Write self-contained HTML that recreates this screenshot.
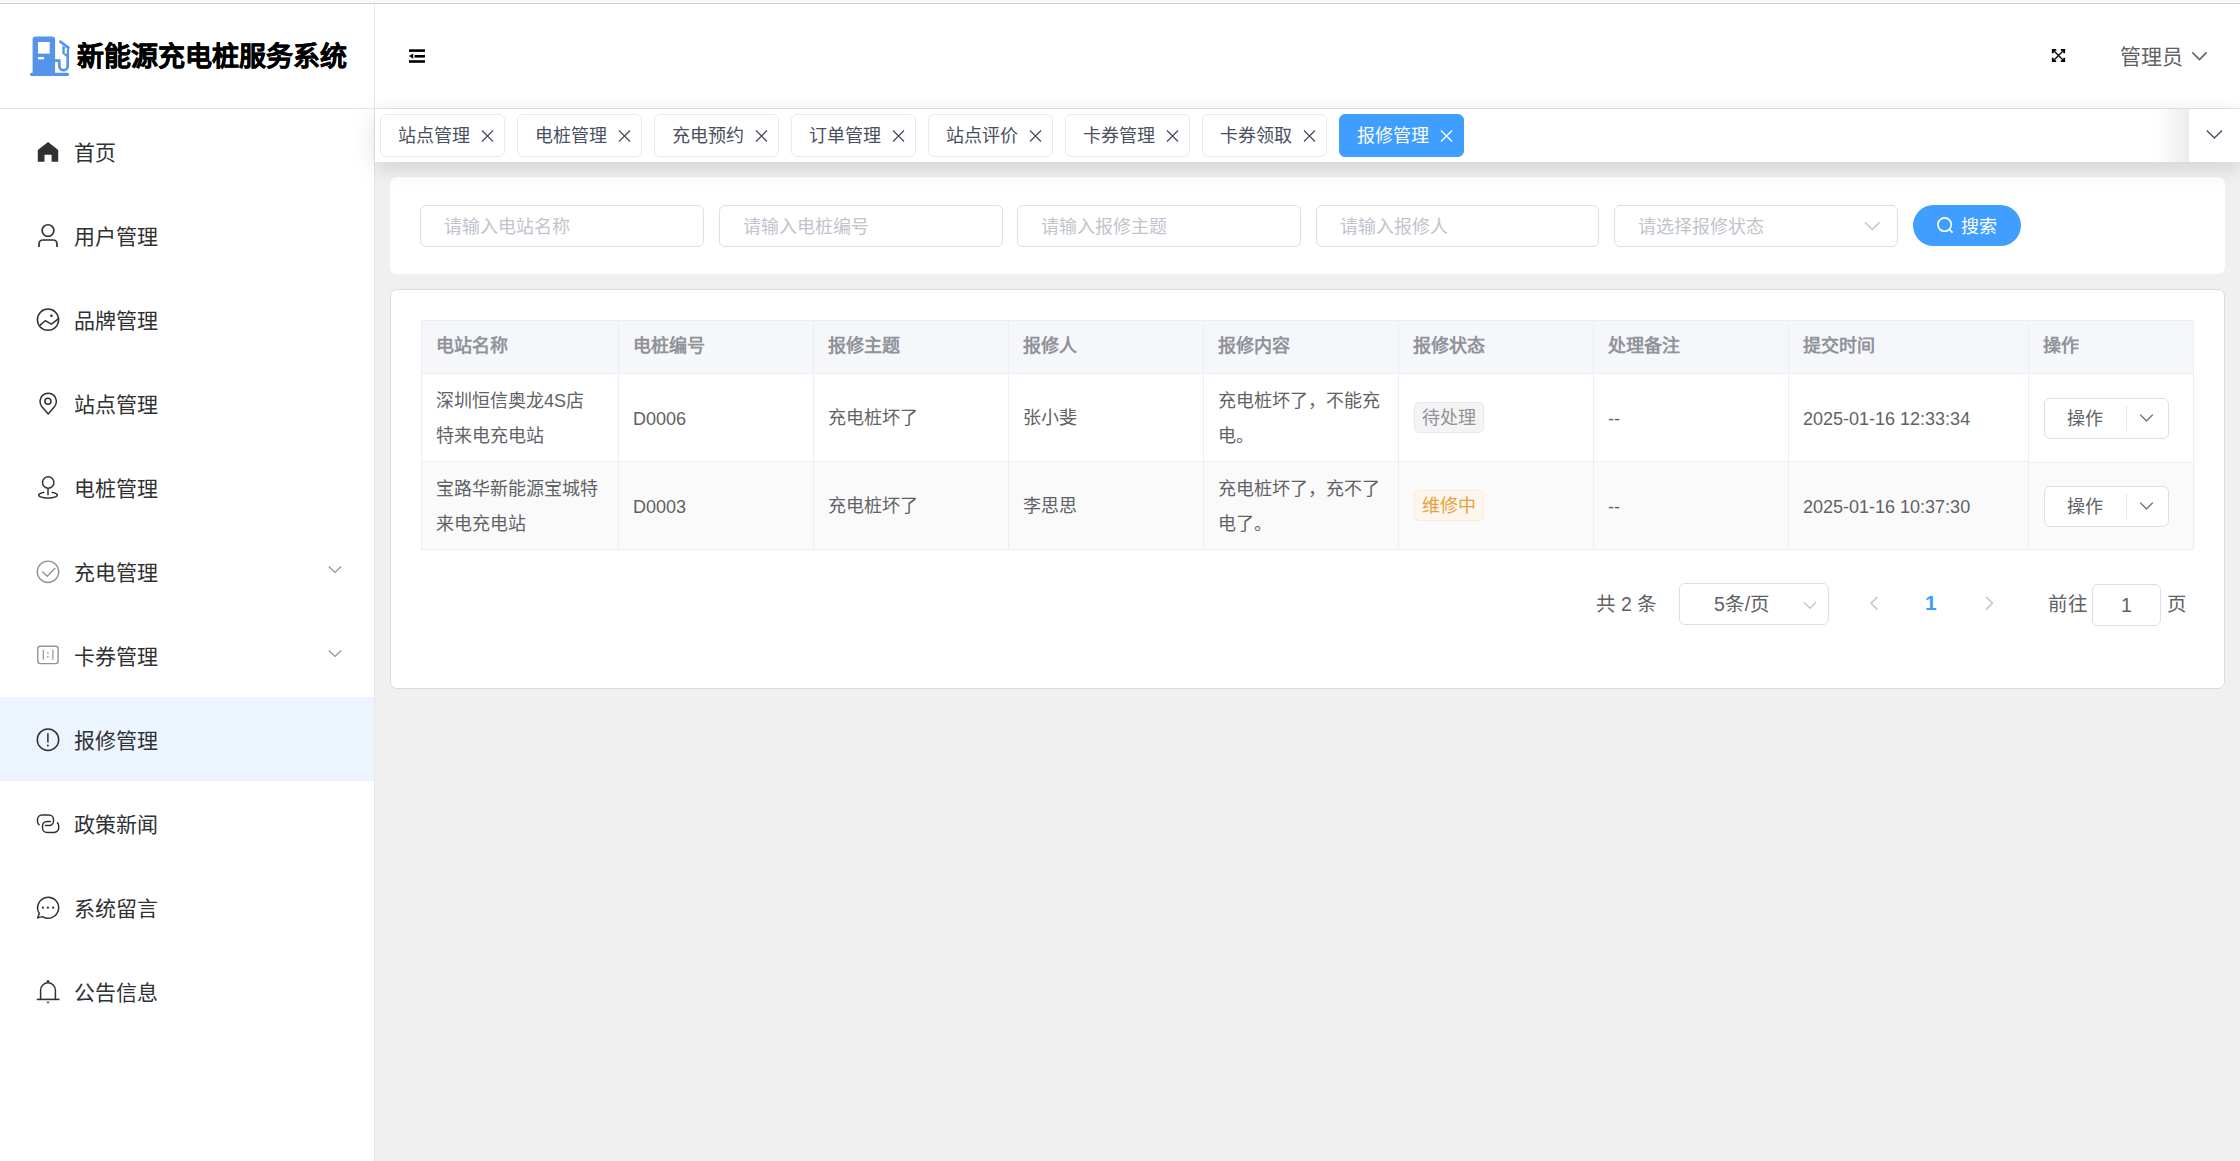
<!DOCTYPE html>
<html lang="zh-CN"><head><meta charset="utf-8">
<style>
*{box-sizing:border-box;margin:0;padding:0}
html,body{width:2240px;height:1161px;overflow:hidden}
body{position:relative;background:#f0f0f0;font-family:"Liberation Sans",sans-serif;color:#303133}
.abs{position:absolute}
#strip{left:0;top:0;width:2240px;height:4px;background:linear-gradient(#f6f7f9 0,#f6f7f9 2px,#fbfbfc 2px,#fbfbfc 3px,#cbcbcb 3px)}
#header{left:0;top:4px;width:2240px;height:104px;background:#fff}
#hline{left:0;top:108px;width:2240px;height:1px;background:#e6e6e6}
#side{left:0;top:109px;width:374px;height:1052px;background:#fff}
#vline{left:374px;top:4px;width:1px;height:1157px;background:#e6e6e6}
.title{left:77px;top:37px;font-size:27px;line-height:40px;font-weight:bold;color:#000;white-space:nowrap;-webkit-text-stroke:.4px #000}
.menu{left:0;width:374px;height:84px}
.menu .t{position:absolute;left:74px;top:24px;font-size:21px;line-height:40px;color:#303133;white-space:nowrap}
.menu svg{position:absolute;left:0;top:0}
.menu.active{background:#ecf5ff}
#tabbar{left:375px;top:109px;width:1865px;height:53px;background:#fff;box-shadow:0 6px 22px rgba(0,0,0,.13);z-index:5}
.tab{position:absolute;top:5px;width:125px;height:43px;border:1px solid #e8eaec;border-radius:6px;background:#fff}
.tab .t{position:absolute;left:17px;top:6px;font-size:18px;line-height:30px;color:#495060;white-space:nowrap}
.tab svg{position:absolute;left:0;top:0}
.tab.on{background:#409eff;border-color:#409eff}
.tab.on .t{color:#fff}
.card{background:#fff;border-radius:7px}
.inp{position:absolute;top:205px;height:42px;width:284px;border:1px solid #dcdfe6;border-radius:6px;background:#fff}
.inp .t{position:absolute;left:23px;top:6px;font-size:18px;line-height:30px;color:#c0c4cc;white-space:nowrap}
.hl{height:1px;background:#ebeef5}
.vl{width:1px;background:#ebeef5}
.th{font-size:18px;line-height:30px;font-weight:bold;color:#909399;white-space:nowrap}
.td{font-size:18px;line-height:34.5px;color:#606266;white-space:nowrap}
.tag{height:31px;padding:0 7px;border:1px solid;border-radius:5px;font-size:18px;line-height:31px;white-space:nowrap}
.obtn{width:125px;height:41px;border:1px solid #dcdfe6;border-radius:6px;background:#fff}
.obtn .t{position:absolute;left:22px;top:5px;font-size:18px;line-height:30px;color:#606266}
.obtn .dv{position:absolute;left:81px;top:7px;width:1px;height:25px;background:#e4e7ed}
.obtn svg{position:absolute;left:0;top:0}
.pg{font-size:19.5px;line-height:30px;color:#606266;white-space:nowrap}
</style></head><body>
<div id="strip" class="abs"></div>
<div id="header" class="abs"></div>
<div id="hline" class="abs"></div>
<div id="side" class="abs"></div>
<div id="vline" class="abs"></div>

<!-- logo -->
<svg class="abs" style="left:0;top:0" width="80" height="90">
 <g fill="#5594eb">
  <path d="M35.6 36.5H52.1A3 3 0 0 1 55.1 39.5V73H32.6V39.5A3 3 0 0 1 35.6 36.5Z"/>
  <rect x="30" y="72.8" width="39" height="3.2" rx="1.5"/>
 </g>
 <g fill="#fff">
  <rect x="38" y="42" width="11.7" height="11.6"/>
  <rect x="38" y="57" width="6" height="2.4"/>
 </g>
 <path d="M55 60.7H59.3V66A4.2 4.2 0 0 0 67.7 66V48.5" fill="none" stroke="#5594eb" stroke-width="2.7"/>
 <path d="M60.3 41.6L68.6 47.8" fill="none" stroke="#5594eb" stroke-width="2.6" stroke-linecap="round"/>
 <path d="M62.3 45.6L69 49.8V56.6H65.8L62.3 53.6Z" fill="#5594eb"/>
 <rect x="64.7" y="48.2" width="2.2" height="5.5" fill="#fff"/>
</svg>
<div class="abs title">新能源充电桩服务系统</div>

<!-- hamburger -->
<svg class="abs" style="left:400px;top:40px" width="40" height="30">
 <g fill="#000">
  <rect x="9" y="9.3" width="16" height="2.6"/>
  <rect x="14.5" y="15" width="10.5" height="2.6"/>
  <rect x="9" y="20.2" width="16" height="2.6"/>
  <path d="M13.2 13.4v5.4l-4.2-2.7z"/>
 </g>
</svg>

<!-- fullscreen -->
<svg class="abs" style="left:2040px;top:40px" width="40" height="30">
 <g fill="none" stroke="#000">
  <path d="M13 10l11 11M24 10l-11 11" stroke-width="1.3"/>
  <path d="M12.8 13.2V9.8H16.2M24.2 13.2V9.8H20.8M12.8 17.8V21.2H16.2M24.2 17.8V21.2H20.8" stroke-width="1.8"/>
 </g>
</svg>
<div class="abs" style="left:2120px;top:37px;font-size:21px;line-height:40px;color:#606266">管理员</div>
<svg class="abs" style="left:2180px;top:40px" width="40" height="30">
 <path d="M12.3 12.4l7.2 7.2 7.2-7.2" fill="none" stroke="#606266" stroke-width="1.5"/>
</svg>

<div class="menu abs" style="top:109px"><div class="t">首页</div></div>
<div class="menu abs" style="top:193px"><div class="t">用户管理</div></div>
<div class="menu abs" style="top:277px"><div class="t">品牌管理</div></div>
<div class="menu abs" style="top:361px"><div class="t">站点管理</div></div>
<div class="menu abs" style="top:445px"><div class="t">电桩管理</div></div>
<div class="menu abs" style="top:529px"><div class="t">充电管理</div></div>
<div class="menu abs" style="top:613px"><div class="t">卡券管理</div></div>
<div class="menu abs active" style="top:697px"><div class="t">报修管理</div></div>
<div class="menu abs" style="top:781px"><div class="t">政策新闻</div></div>
<div class="menu abs" style="top:865px"><div class="t">系统留言</div></div>
<div class="menu abs" style="top:949px"><div class="t">公告信息</div></div>
<svg class="abs" style="left:0;top:0;z-index:2" width="374" height="1161">
 <path d="M48.1 141.9L58.2 150V161.7H51.6V154.7H44.5V161.7H37.8V150Z" fill="#303133"/>
 <g fill="none" stroke="#303133" stroke-width="1.7">
  <circle cx="48" cy="230.6" r="5.85"/>
  <path d="M39 247V244a4 4 0 0 1 4-4H53a4 4 0 0 1 4 4V247"/>
 </g>
 <g fill="none" stroke="#303133" stroke-width="1.5" stroke-linejoin="round">
  <circle cx="48" cy="319.7" r="10.6"/>
  <path d="M39.3 325.9L45.3 320.7L51.4 324.1L58.6 318.6"/>
 </g>
 <circle cx="51.4" cy="315.7" r="1.3" fill="#303133"/>
 <g fill="none" stroke="#303133" stroke-width="1.5" stroke-linejoin="round">
  <path d="M48.2 414L41.96 406.66A8.2 8.2 0 1 1 54.44 406.66Z"/>
  <circle cx="47.9" cy="401.2" r="3.0"/>
 </g>
 <g fill="none" stroke="#303133" stroke-width="1.5">
  <circle cx="48.2" cy="482.5" r="5.7"/>
  <path d="M48 488.3V495.3"/>
  <path d="M44.3 492.3A9.3 3 0 1 0 51.7 492.3"/>
 </g>
 <g fill="none" stroke="#909399" stroke-width="1.4" stroke-linejoin="round">
  <circle cx="48" cy="571.8" r="10.7"/>
  <path d="M42.2 571.5L47.2 576.3L55.3 568"/>
  <rect x="37.8" y="646.2" width="20.3" height="17.4" rx="2.5"/>
  <path d="M43.3 649.8V659.8M52.9 649.8V659.8" stroke-width="1.2"/>
 </g>
 <g fill="#909399"><circle cx="47.9" cy="652.9" r=".8"/><circle cx="47.9" cy="656.9" r=".8"/></g>
 <g fill="none" stroke="#909399" stroke-width="1.2">
  <path d="M328.8 566.5L335 572.5L341.2 566.5"/>
  <path d="M328.8 650.5L335 656.5L341.2 650.5"/>
 </g>
 <g fill="none" stroke="#303133" stroke-width="1.5">
  <circle cx="48" cy="739.7" r="10.7"/>
  <path d="M47.9 733.3V742.4"/>
 </g>
 <circle cx="47.9" cy="745.4" r="1" fill="#303133"/>
 <g fill="none" stroke="#303133" stroke-width="1.5">
  <path d="M39.5 825.2A4.5 4.5 0 0 1 37.5 821.6V819.5A4.5 4.5 0 0 1 42 815H49A4.5 4.5 0 0 1 53.5 819.5V821.1A4.5 4.5 0 0 1 49 825.6H44.8"/>
  <path d="M50.9 821.5H47A4.5 4.5 0 0 0 42.5 826V827.9A4.5 4.5 0 0 0 47 832.4H54.2A4.5 4.5 0 0 0 58.7 827.9V826A4.5 4.5 0 0 0 57 822.4"/>
 </g>
 <g fill="none" stroke="#303133" stroke-width="1.5" stroke-linejoin="round">
  <path d="M39.3 913.4L37.6 917.9L42.5 916.6A10.5 10.5 0 1 0 39.3 913.4Z"/>
 </g>
 <g fill="#303133"><circle cx="42.9" cy="907.7" r="1.1"/><circle cx="47.9" cy="907.7" r="1.1"/><circle cx="53.1" cy="907.7" r="1.1"/></g>
 <g fill="none" stroke="#303133" stroke-width="1.5">
  <path d="M40.6 999.4V990.2A7.4 7.4 0 0 1 55.4 990.2V999.4"/>
  <path d="M36.8 999.4H59.5" stroke-width="1.6"/>
 </g>
 <g fill="#303133"><circle cx="48" cy="981.3" r="1.2"/><path d="M46.3 1001.8H49.7L48 1003.4Z"/></g>
</svg>
<div id="tabbar" class="abs">
<div class="tab" style="left:5px"><div class="t">站点管理</div><svg width="123" height="41"><path d="M101 15.5l11 11M112 15.5l-11 11" stroke="#495060" stroke-width="1.3" fill="none"/></svg></div>
<div class="tab" style="left:142px"><div class="t">电桩管理</div><svg width="123" height="41"><path d="M101 15.5l11 11M112 15.5l-11 11" stroke="#495060" stroke-width="1.3" fill="none"/></svg></div>
<div class="tab" style="left:279px"><div class="t">充电预约</div><svg width="123" height="41"><path d="M101 15.5l11 11M112 15.5l-11 11" stroke="#495060" stroke-width="1.3" fill="none"/></svg></div>
<div class="tab" style="left:416px"><div class="t">订单管理</div><svg width="123" height="41"><path d="M101 15.5l11 11M112 15.5l-11 11" stroke="#495060" stroke-width="1.3" fill="none"/></svg></div>
<div class="tab" style="left:553px"><div class="t">站点评价</div><svg width="123" height="41"><path d="M101 15.5l11 11M112 15.5l-11 11" stroke="#495060" stroke-width="1.3" fill="none"/></svg></div>
<div class="tab" style="left:690px"><div class="t">卡券管理</div><svg width="123" height="41"><path d="M101 15.5l11 11M112 15.5l-11 11" stroke="#495060" stroke-width="1.3" fill="none"/></svg></div>
<div class="tab" style="left:827px"><div class="t">卡券领取</div><svg width="123" height="41"><path d="M101 15.5l11 11M112 15.5l-11 11" stroke="#495060" stroke-width="1.3" fill="none"/></svg></div>
<div class="tab on" style="left:964px"><div class="t">报修管理</div><svg width="123" height="41"><path d="M101 15.5l11 11M112 15.5l-11 11" stroke="#fff" stroke-width="1.3" fill="none"/></svg></div>
<div class="abs" style="left:1782px;top:0;width:32px;height:53px;background:linear-gradient(90deg,rgba(0,0,0,0),rgba(0,0,0,.08))"></div>
<div class="abs" style="left:1814px;top:0;width:51px;height:53px;background:#fff"></div>
<svg class="abs" style="left:1814px;top:0" width="51" height="53"><path d="M17.8 21.4L25.4 29L33 21.4" fill="none" stroke="#495060" stroke-width="1.4"/></svg>
</div>
<div class="abs card" style="left:390px;top:177px;width:1835px;height:97px"></div>
<div class="inp" style="left:420px;width:284px"><div class="t">请输入电站名称</div></div>
<div class="inp" style="left:719px;width:284px"><div class="t">请输入电桩编号</div></div>
<div class="inp" style="left:1017px;width:284px"><div class="t">请输入报修主题</div></div>
<div class="inp" style="left:1316px;width:283px"><div class="t">请输入报修人</div></div>
<div class="inp" style="left:1614px;width:284px"><div class="t">请选择报修状态</div></div>
<svg class="abs" style="left:1850px;top:205px" width="50" height="42"><path d="M15 17.3L22.3 24.6L29.6 17.3" fill="none" stroke="#c0c4cc" stroke-width="1.4"/></svg>
<div class="abs" style="left:1913px;top:205px;width:108px;height:41px;border-radius:21px;background:#409eff"></div>
<svg class="abs" style="left:1913px;top:205px" width="108" height="41"><g fill="none" stroke="#fff" stroke-width="1.6"><circle cx="31.6" cy="19.6" r="6.7"/><path d="M36.4 24.4L39.6 27.6"/></g></svg>
<div class="abs" style="left:1961px;top:212px;font-size:18px;line-height:30px;color:#fff">搜索</div>
<div class="abs" style="left:390px;top:289px;width:1835px;height:400px;background:#fff;border:1px solid #dcdcdc;border-radius:7px"></div>
<div class="abs" style="left:421px;top:320px;width:1772px;height:53px;background:#f5f7fa"></div>
<div class="abs" style="left:421px;top:374px;width:1772px;height:87px;background:#fff"></div>
<div class="abs" style="left:421px;top:462px;width:1772px;height:87px;background:#fafafa"></div>
<div class="abs hl" style="left:421px;top:320px;width:1773px"></div>
<div class="abs hl" style="left:421px;top:373px;width:1773px"></div>
<div class="abs hl" style="left:421px;top:549px;width:1773px"></div>
<div class="abs hl" style="left:421px;top:461px;width:1607px"></div>
<div class="abs hl" style="left:2028px;top:462px;width:166px"></div>
<div class="abs vl" style="left:421px;top:320px;height:230px"></div>
<div class="abs vl" style="left:618px;top:320px;height:230px"></div>
<div class="abs vl" style="left:813px;top:320px;height:230px"></div>
<div class="abs vl" style="left:1008px;top:320px;height:230px"></div>
<div class="abs vl" style="left:1203px;top:320px;height:230px"></div>
<div class="abs vl" style="left:1398px;top:320px;height:230px"></div>
<div class="abs vl" style="left:1593px;top:320px;height:230px"></div>
<div class="abs vl" style="left:1788px;top:320px;height:230px"></div>
<div class="abs vl" style="left:2028px;top:320px;height:230px"></div>
<div class="abs vl" style="left:2193px;top:320px;height:230px"></div>
<div class="abs th" style="left:436px;top:331px">电站名称</div>
<div class="abs th" style="left:633px;top:331px">电桩编号</div>
<div class="abs th" style="left:828px;top:331px">报修主题</div>
<div class="abs th" style="left:1023px;top:331px">报修人</div>
<div class="abs th" style="left:1218px;top:331px">报修内容</div>
<div class="abs th" style="left:1413px;top:331px">报修状态</div>
<div class="abs th" style="left:1608px;top:331px">处理备注</div>
<div class="abs th" style="left:1803px;top:331px">提交时间</div>
<div class="abs th" style="left:2043px;top:331px">操作</div>
<div class="abs td" style="left:436px;top:384px">深圳恒信奥龙4S店<br>特来电充电站</div>
<div class="abs td" style="left:633px;top:401.75px">D0006</div>
<div class="abs td" style="left:828px;top:401.25px">充电桩坏了</div>
<div class="abs td" style="left:1023px;top:401.25px">张小斐</div>
<div class="abs td" style="left:1218px;top:384px">充电桩坏了，不能充<br>电。</div>
<div class="abs tag" style="left:1414px;top:402.0px;background:#f4f4f5;border-color:#e9e9eb;color:#909399">待处理</div>
<div class="abs td" style="left:1608px;top:401.75px">--</div>
<div class="abs td" style="left:1803px;top:401.75px">2025-01-16 12:33:34</div>
<div class="abs obtn" style="left:2044px;top:398.0px"><div class="t">操作</div><div class="dv"></div><svg width="123" height="39"><path d="M95.2 15.6L101.5 21.9L107.8 15.6" fill="none" stroke="#606266" stroke-width="1.3"/></svg></div>
<div class="abs td" style="left:436px;top:472px">宝路华新能源宝城特<br>来电充电站</div>
<div class="abs td" style="left:633px;top:489.75px">D0003</div>
<div class="abs td" style="left:828px;top:489.25px">充电桩坏了</div>
<div class="abs td" style="left:1023px;top:489.25px">李思思</div>
<div class="abs td" style="left:1218px;top:472px">充电桩坏了，充不了<br>电了。</div>
<div class="abs tag" style="left:1414px;top:490.0px;background:#fdf6ec;border-color:#faecd8;color:#e6a23c">维修中</div>
<div class="abs td" style="left:1608px;top:489.75px">--</div>
<div class="abs td" style="left:1803px;top:489.75px">2025-01-16 10:37:30</div>
<div class="abs obtn" style="left:2044px;top:486.0px"><div class="t">操作</div><div class="dv"></div><svg width="123" height="39"><path d="M95.2 15.6L101.5 21.9L107.8 15.6" fill="none" stroke="#606266" stroke-width="1.3"/></svg></div>
<div class="abs pg" style="left:1595.5px;top:589px">共 2 条</div>
<div class="abs" style="left:1679px;top:583px;width:150px;height:42px;border:1px solid #dcdfe6;border-radius:6px"></div>
<div class="abs pg" style="left:1714px;top:589px">5条/页</div>
<svg class="abs" style="left:1679px;top:583px" width="150" height="42"><path d="M125 19.3L131 25.3L137 19.3" fill="none" stroke="#c0c4cc" stroke-width="1.3"/></svg>
<svg class="abs" style="left:1850px;top:583px" width="160" height="42"><g fill="none" stroke="#c0c4cc" stroke-width="1.5"><path d="M27.5 14L21 20.3L27.5 26.6"/><path d="M136 14L142.5 20.3L136 26.6"/></g></svg>
<div class="abs pg" style="left:1925px;top:588px;color:#409eff;font-weight:bold;font-size:21px">1</div>
<div class="abs pg" style="left:2047.5px;top:589px">前往</div>
<div class="abs" style="left:2092px;top:584px;width:69px;height:42px;border:1px solid #dcdfe6;border-radius:6px"></div>
<div class="abs pg" style="left:2121px;top:590px">1</div>
<div class="abs pg" style="left:2167px;top:589px">页</div>
</body></html>
